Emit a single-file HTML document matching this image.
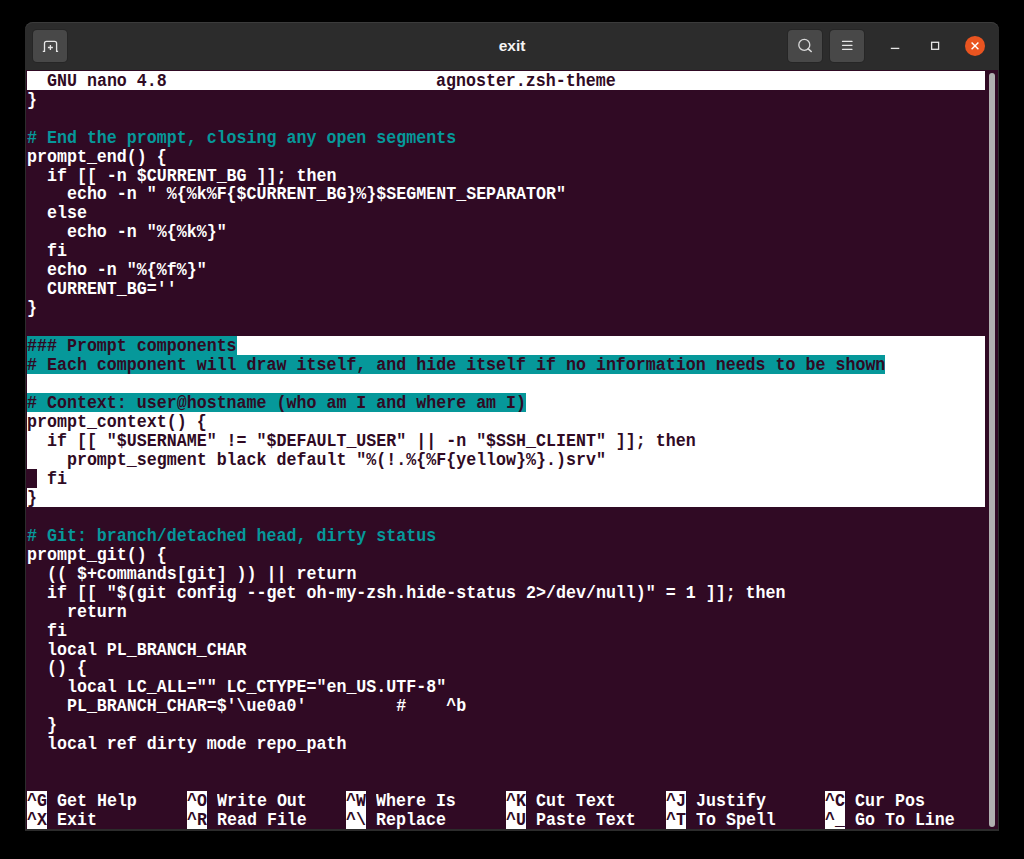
<!DOCTYPE html>
<html><head><meta charset="utf-8"><style>
html,body{margin:0;padding:0;background:#000;width:1024px;height:859px;overflow:hidden}
#win{position:absolute;left:25px;top:22px;width:974px;height:809px;background:#2c2c2c;border-radius:8px 8px 0 0;box-shadow:inset 0 1px 0 #3b3b3b}
#term{position:absolute;left:26px;top:70px;width:972px;height:759px;background:#300a24}
.bg{position:absolute}
.t{position:absolute;font-family:"Liberation Mono",monospace;font-weight:bold;font-size:18px;line-height:18.96px;height:18.96px;white-space:pre;transform-origin:0 0;transform:scaleX(0.924)}
.btn{position:absolute;top:30px;width:34px;height:32px;background:#484848;border-radius:4px;box-shadow:0 0 0 1px #262626}
#title{position:absolute;left:0;top:35.6px;width:1024px;text-align:center;font-family:"Liberation Sans",sans-serif;font-weight:bold;font-size:15.5px;color:#f4f4f4;line-height:20px}
#sb{position:absolute;left:989px;top:73px;width:6px;height:754px;background:#b0b0b0;border-radius:3px}
</style></head><body>
<div id="win"></div>
<div class="btn" style="left:33px"></div>
<svg style="position:absolute;left:33px;top:30px" width="34" height="32" viewBox="0 0 34 32">
<path d="M9.8 21.4 H11.5 V13.4 Q11.5 11.4 13.5 11.4 H21.6 Q23.6 11.4 23.6 13.4 V21.4 H25.1" fill="none" stroke="#e6e6e6" stroke-width="1.3"/>
<path d="M17.4 15 V20 M14.9 17.5 H19.9" stroke="#e6e6e6" stroke-width="1.3"/>
</svg>
<div id="title">exit</div>
<div class="btn" style="left:788px"></div>
<div class="btn" style="left:830px"></div>
<svg style="position:absolute;left:788px;top:30px" width="34" height="32" viewBox="0 0 34 32">
<circle cx="16.3" cy="14.9" r="5.5" fill="none" stroke="#d8d8d8" stroke-width="1.3"/>
<path d="M20.2 18.8 L23.2 21.5" stroke="#dcdcdc" stroke-width="1.6" stroke-linecap="round"/>
</svg>
<svg style="position:absolute;left:830px;top:30px" width="34" height="32" viewBox="0 0 34 32">
<path d="M12.5 11.4 H22 M12.5 15.3 H22 M12.5 19.3 H22" stroke="#e6e6e6" stroke-width="1.3" stroke-linecap="round"/>
</svg>
<svg style="position:absolute;left:880px;top:30px" width="120" height="32" viewBox="0 0 120 32">
<path d="M10.8 18.4 H19.3" stroke="#e6e6e6" stroke-width="1.3"/>
<rect x="51.6" y="12.3" width="7" height="7" fill="none" stroke="#e6e6e6" stroke-width="1.3"/>
<circle cx="95" cy="15.9" r="10" fill="#e95420"/>
<path d="M91.6 12.5 L98.4 19.3 M98.4 12.5 L91.6 19.3" stroke="#fff" stroke-width="1.4"/>
</svg>
<div id="term"></div>
<div class="bg" style="left:27.00px;top:70.90px;width:958.08px;height:18.96px;background:#ffffff"></div>
<div class="bg" style="left:27.00px;top:336.34px;width:958.08px;height:170.64px;background:#ffffff"></div>
<div class="bg" style="left:27.00px;top:336.34px;width:209.58px;height:18.96px;background:#06989a"></div>
<div class="bg" style="left:27.00px;top:355.30px;width:858.28px;height:18.96px;background:#06989a"></div>
<div class="bg" style="left:27.00px;top:393.22px;width:499.00px;height:18.96px;background:#06989a"></div>
<div class="bg" style="left:27.00px;top:469.06px;width:9.98px;height:18.96px;background:#300a24"></div>
<div class="bg" style="left:27.00px;top:791.38px;width:19.96px;height:37.92px;background:#ffffff"></div>
<div class="bg" style="left:186.68px;top:791.38px;width:19.96px;height:37.92px;background:#ffffff"></div>
<div class="bg" style="left:346.36px;top:791.38px;width:19.96px;height:37.92px;background:#ffffff"></div>
<div class="bg" style="left:506.04px;top:791.38px;width:19.96px;height:37.92px;background:#ffffff"></div>
<div class="bg" style="left:665.72px;top:791.38px;width:19.96px;height:37.92px;background:#ffffff"></div>
<div class="bg" style="left:825.40px;top:791.38px;width:19.96px;height:37.92px;background:#ffffff"></div>
<div class="t" style="left:46.96px;top:71.70px;color:#300a24">GNU nano 4.8</div>
<div class="t" style="left:436.18px;top:71.70px;color:#300a24">agnoster.zsh-theme</div>
<div class="t" style="left:27.00px;top:90.66px;color:#ffffff">}</div>
<div class="t" style="left:27.00px;top:128.58px;color:#06989a"># End the prompt, closing any open segments</div>
<div class="t" style="left:27.00px;top:147.54px;color:#ffffff">prompt_end() {</div>
<div class="t" style="left:27.00px;top:166.50px;color:#ffffff">  if [[ -n $CURRENT_BG ]]; then</div>
<div class="t" style="left:27.00px;top:185.46px;color:#ffffff">    echo -n &quot; %{%k%F{$CURRENT_BG}%}$SEGMENT_SEPARATOR&quot;</div>
<div class="t" style="left:27.00px;top:204.42px;color:#ffffff">  else</div>
<div class="t" style="left:27.00px;top:223.38px;color:#ffffff">    echo -n &quot;%{%k%}&quot;</div>
<div class="t" style="left:27.00px;top:242.34px;color:#ffffff">  fi</div>
<div class="t" style="left:27.00px;top:261.30px;color:#ffffff">  echo -n &quot;%{%f%}&quot;</div>
<div class="t" style="left:27.00px;top:280.26px;color:#ffffff">  CURRENT_BG=&#x27;&#x27;</div>
<div class="t" style="left:27.00px;top:299.22px;color:#ffffff">}</div>
<div class="t" style="left:27.00px;top:337.14px;color:#300a24">### Prompt components</div>
<div class="t" style="left:27.00px;top:356.10px;color:#300a24"># Each component will draw itself, and hide itself if no information needs to be shown</div>
<div class="t" style="left:27.00px;top:394.02px;color:#300a24"># Context: user@hostname (who am I and where am I)</div>
<div class="t" style="left:27.00px;top:412.98px;color:#300a24">prompt_context() {</div>
<div class="t" style="left:27.00px;top:431.94px;color:#300a24">  if [[ &quot;$USERNAME&quot; != &quot;$DEFAULT_USER&quot; || -n &quot;$SSH_CLIENT&quot; ]]; then</div>
<div class="t" style="left:27.00px;top:450.90px;color:#300a24">    prompt_segment black default &quot;%(!.%{%F{yellow}%}.)srv&quot;</div>
<div class="t" style="left:27.00px;top:469.86px;color:#300a24">  fi</div>
<div class="t" style="left:27.00px;top:488.82px;color:#300a24">}</div>
<div class="t" style="left:27.00px;top:526.74px;color:#06989a"># Git: branch/detached head, dirty status</div>
<div class="t" style="left:27.00px;top:545.70px;color:#ffffff">prompt_git() {</div>
<div class="t" style="left:27.00px;top:564.66px;color:#ffffff">  (( $+commands[git] )) || return</div>
<div class="t" style="left:27.00px;top:583.62px;color:#ffffff">  if [[ &quot;$(git config --get oh-my-zsh.hide-status 2&gt;/dev/null)&quot; = 1 ]]; then</div>
<div class="t" style="left:27.00px;top:602.58px;color:#ffffff">    return</div>
<div class="t" style="left:27.00px;top:621.54px;color:#ffffff">  fi</div>
<div class="t" style="left:27.00px;top:640.50px;color:#ffffff">  local PL_BRANCH_CHAR</div>
<div class="t" style="left:27.00px;top:659.46px;color:#ffffff">  () {</div>
<div class="t" style="left:27.00px;top:678.42px;color:#ffffff">    local LC_ALL=&quot;&quot; LC_CTYPE=&quot;en_US.UTF-8&quot;</div>
<div class="t" style="left:27.00px;top:697.38px;color:#ffffff">    PL_BRANCH_CHAR=$&#x27;\ue0a0&#x27;         #    ^b</div>
<div class="t" style="left:27.00px;top:716.34px;color:#ffffff">  }</div>
<div class="t" style="left:27.00px;top:735.30px;color:#ffffff">  local ref dirty mode repo_path</div>
<div class="t" style="left:27.00px;top:792.18px;color:#300a24">^G</div>
<div class="t" style="left:56.94px;top:792.18px;color:#ffffff">Get Help</div>
<div class="t" style="left:186.68px;top:792.18px;color:#300a24">^O</div>
<div class="t" style="left:216.62px;top:792.18px;color:#ffffff">Write Out</div>
<div class="t" style="left:346.36px;top:792.18px;color:#300a24">^W</div>
<div class="t" style="left:376.30px;top:792.18px;color:#ffffff">Where Is</div>
<div class="t" style="left:506.04px;top:792.18px;color:#300a24">^K</div>
<div class="t" style="left:535.98px;top:792.18px;color:#ffffff">Cut Text</div>
<div class="t" style="left:665.72px;top:792.18px;color:#300a24">^J</div>
<div class="t" style="left:695.66px;top:792.18px;color:#ffffff">Justify</div>
<div class="t" style="left:825.40px;top:792.18px;color:#300a24">^C</div>
<div class="t" style="left:855.34px;top:792.18px;color:#ffffff">Cur Pos</div>
<div class="t" style="left:27.00px;top:811.14px;color:#300a24">^X</div>
<div class="t" style="left:56.94px;top:811.14px;color:#ffffff">Exit</div>
<div class="t" style="left:186.68px;top:811.14px;color:#300a24">^R</div>
<div class="t" style="left:216.62px;top:811.14px;color:#ffffff">Read File</div>
<div class="t" style="left:346.36px;top:811.14px;color:#300a24">^\</div>
<div class="t" style="left:376.30px;top:811.14px;color:#ffffff">Replace</div>
<div class="t" style="left:506.04px;top:811.14px;color:#300a24">^U</div>
<div class="t" style="left:535.98px;top:811.14px;color:#ffffff">Paste Text</div>
<div class="t" style="left:665.72px;top:811.14px;color:#300a24">^T</div>
<div class="t" style="left:695.66px;top:811.14px;color:#ffffff">To Spell</div>
<div class="t" style="left:825.40px;top:811.14px;color:#300a24">^_</div>
<div class="t" style="left:855.34px;top:811.14px;color:#ffffff">Go To Line</div>
<div id="sb"></div>
</body></html>
